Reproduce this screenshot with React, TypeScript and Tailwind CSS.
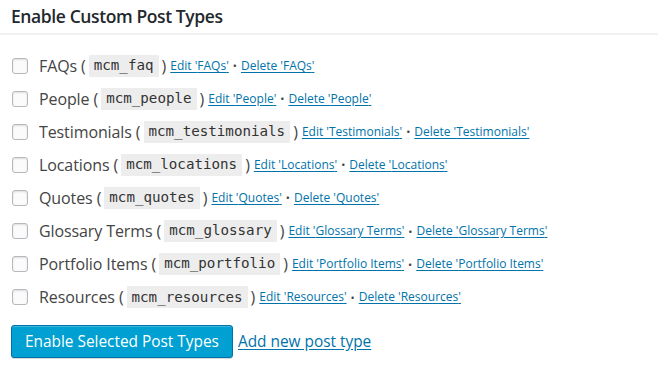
import React from "react";

const items: [string, string][] = [
  ["FAQs", "mcm_faq"],
  ["People", "mcm_people"],
  ["Testimonials", "mcm_testimonials"],
  ["Locations", "mcm_locations"],
  ["Quotes", "mcm_quotes"],
  ["Glossary Terms", "mcm_glossary"],
  ["Portfolio Items", "mcm_portfolio"],
  ["Resources", "mcm_resources"],
];

export default function App() {
  return (
    <div
      className="w-[659px] h-[373px] bg-white text-[#444] overflow-hidden"
      style={{ fontFamily: '"Open Sans", "Liberation Sans", sans-serif' }}
    >
      <div className="h-[35px] flex items-center pl-[11px] border-b-2 border-[#f1f1f1] mr-[1px]">
        <h2 className="text-[17.5px] tracking-[-0.4px] font-semibold text-[#23282d] leading-none">
          Enable Custom Post Types
        </h2>
      </div>
      <div className="pt-[14px] pl-[12px]">
        {items.map(([label, slug]) => (
          <div key={slug} className="h-[33.1px] flex items-center">
            <span className="w-[16px] h-[16px] rounded-[3px] border border-[#b4b9be] bg-[#fbfbfb] shadow-[inset_0_1px_2px_rgba(0,0,0,0.12)] shrink-0" />
            <span className="ml-[11px] text-[16px] tracking-[-0.1px] leading-none">{label} (</span>
            <code
              className="mx-[3px] px-[5px] h-[22px] flex items-center bg-[#ededed] text-[#333] text-[14.2px]"
              style={{ fontFamily: '"DejaVu Sans Mono", monospace' }}
            >
              {slug}
            </code>
            <span className="text-[16px] leading-none">)</span>
            <a className="ml-[4px] text-[12px] text-[#0073aa] underline underline-offset-2 leading-none" href="#">
              Edit '{label}'
            </a>
            <span className="mx-[4px] text-[11px] text-[#444] leading-none">•</span>
            <a className="text-[12px] text-[#0073aa] underline underline-offset-2 leading-none" href="#">
              Delete '{label}'
            </a>
          </div>
        ))}
      </div>
      <div className="flex items-center pl-[11px] mt-[11px]">
        <button className="h-[33px] px-[13px] rounded-[3px] bg-[#00a0d2] border border-[#0073aa] text-white text-[15.4px] shadow-[inset_0_1px_0_rgba(120,200,230,0.5),0_1px_0_rgba(0,0,0,0.15)]">
          Enable Selected Post Types
        </button>
        <a className="ml-[5px] text-[15.4px] text-[#0073aa] underline underline-offset-2" href="#">
          Add new post type
        </a>
      </div>
    </div>
  );
}
